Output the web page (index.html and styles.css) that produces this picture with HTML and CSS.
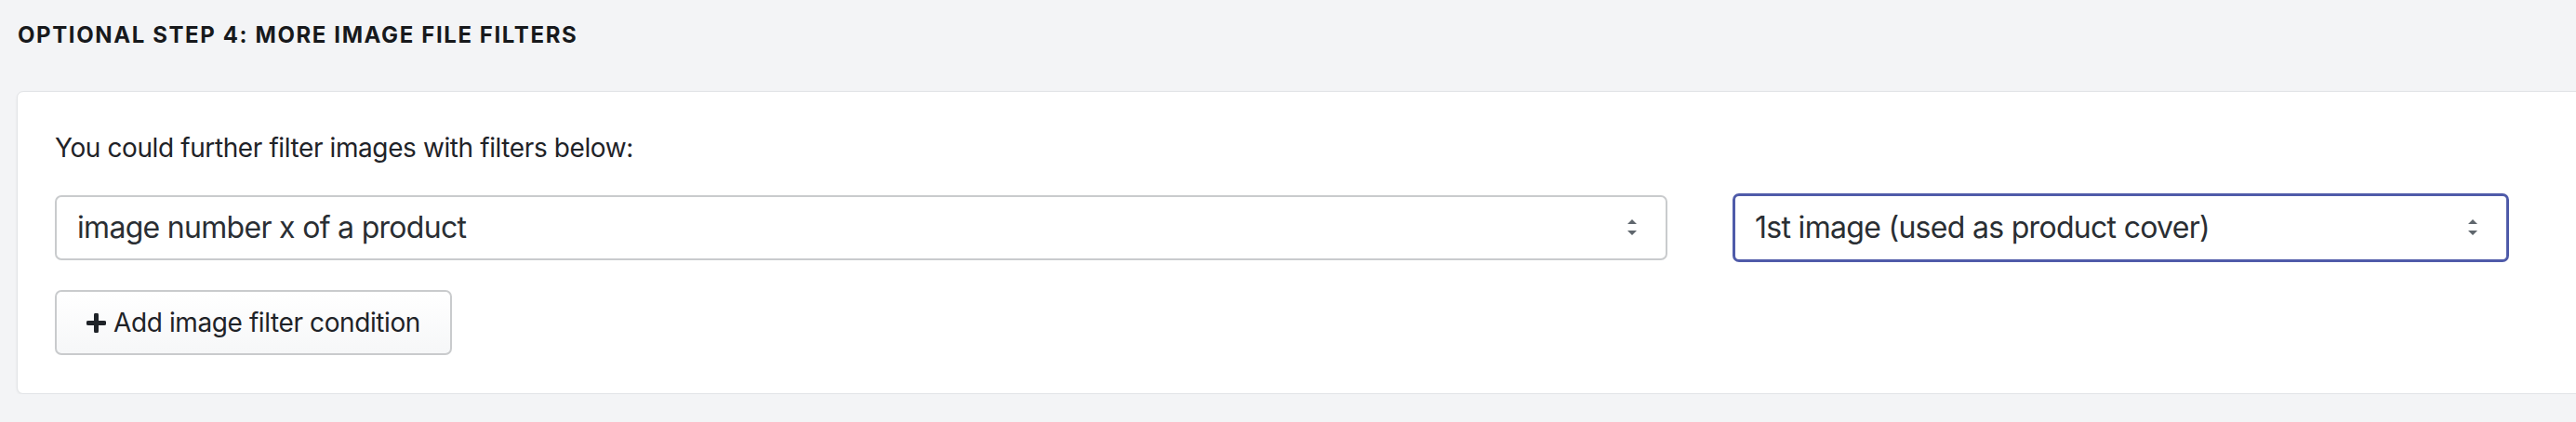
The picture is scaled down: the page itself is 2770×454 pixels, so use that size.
FILE: index.html
```html
<!DOCTYPE html>
<html>
<head>
<meta charset="utf-8">
<link rel="stylesheet" href="styles.css">
</head>
<body>
<div class="page">
  <h2 class="step-title">Optional step 4: More image file filters</h2>
  <div class="card">
    <p class="intro">You could further filter images with filters below:</p>
    <div class="filter-row">
      <div class="select">
        <span class="select-value">image number x of a product</span>
        <svg class="caret" width="12" height="20" viewBox="0 0 12 20"><path d="M6 1 L11 6 H1 Z M1 13 H11 L6 18 Z" fill="#5f666d"/></svg>
      </div>
      <div class="select select-focus">
        <span class="select-value">1st image (used as product cover)</span>
        <svg class="caret" width="12" height="20" viewBox="0 0 12 20"><path d="M6 1 L11 6 H1 Z M1 13 H11 L6 18 Z" fill="#5f666d"/></svg>
      </div>
    </div>
    <button class="add-btn" type="button">
      <svg class="plus" width="21" height="21" viewBox="0 0 21 21"><path d="M10.5 2 V19 M2 10.5 H19" stroke="#1f2328" stroke-width="5" stroke-linecap="round"/></svg>
      <span>Add image filter condition</span>
    </button>
  </div>
</div>
</body>
</html>
```

FILE: styles.css
```css
html, body {
  margin: 0;
  padding: 0;
  background: #f3f4f6;
  overflow: hidden;
}

.page {
  padding: 22px 0 0 18px;
  font-family: Inter, "Liberation Sans", sans-serif;
  color: #1f2328;
}

.step-title {
  margin: 0 0 44px 1px;
  font-size: 24px;
  line-height: 32px;
  font-weight: 700;
  text-transform: uppercase;
  letter-spacing: 1.6px;
  color: #17191c;
}

.card {
  background: #ffffff;
  border: 1px solid #e2e4e7;
  border-radius: 7px;
  box-shadow: 0 1px 3px rgba(0, 0, 0, 0.06);
  padding: 40px 40px 41px 40px;
  margin-right: -60px;
}

.intro {
  margin: 0 0 31px 0;
  font-size: 28px;
  line-height: 40px;
  letter-spacing: -0.4px;
  color: #1f2328;
}

.filter-row {
  display: grid;
  grid-template-columns: 1734px 835px;
  column-gap: 70px;
}

.select {
  height: 70px;
  box-sizing: border-box;
  border: 2px solid #c9cbcd;
  border-radius: 7px;
  background: #fff;
  display: flex;
  align-items: center;
  justify-content: space-between;
  padding: 0 30px 0 22px;
  font-size: 32px;
  line-height: 40px;
  letter-spacing: -0.7px;
  color: #2a2e33;
}

.select-focus {
  border: 3px solid #4f5ba9;
  padding: 0 30px 0 21px;
  height: 74px;
  margin-top: -2px;
}

.caret {
  display: block;
}

.add-btn {
  margin-top: 30px;
  height: 70px;
  width: 427px;
  box-sizing: border-box;
  border: 2px solid #c9cbcd;
  border-radius: 7px;
  background: linear-gradient(#ffffff, #f6f7f8);
  display: flex;
  align-items: center;
  gap: 8px;
  padding: 0 0 0 32px;
  font-family: Inter, "Liberation Sans", sans-serif;
  font-size: 28px;
  letter-spacing: -0.4px;
  color: #1f2328;
  cursor: pointer;
}

.plus {
  display: block;
}
```
